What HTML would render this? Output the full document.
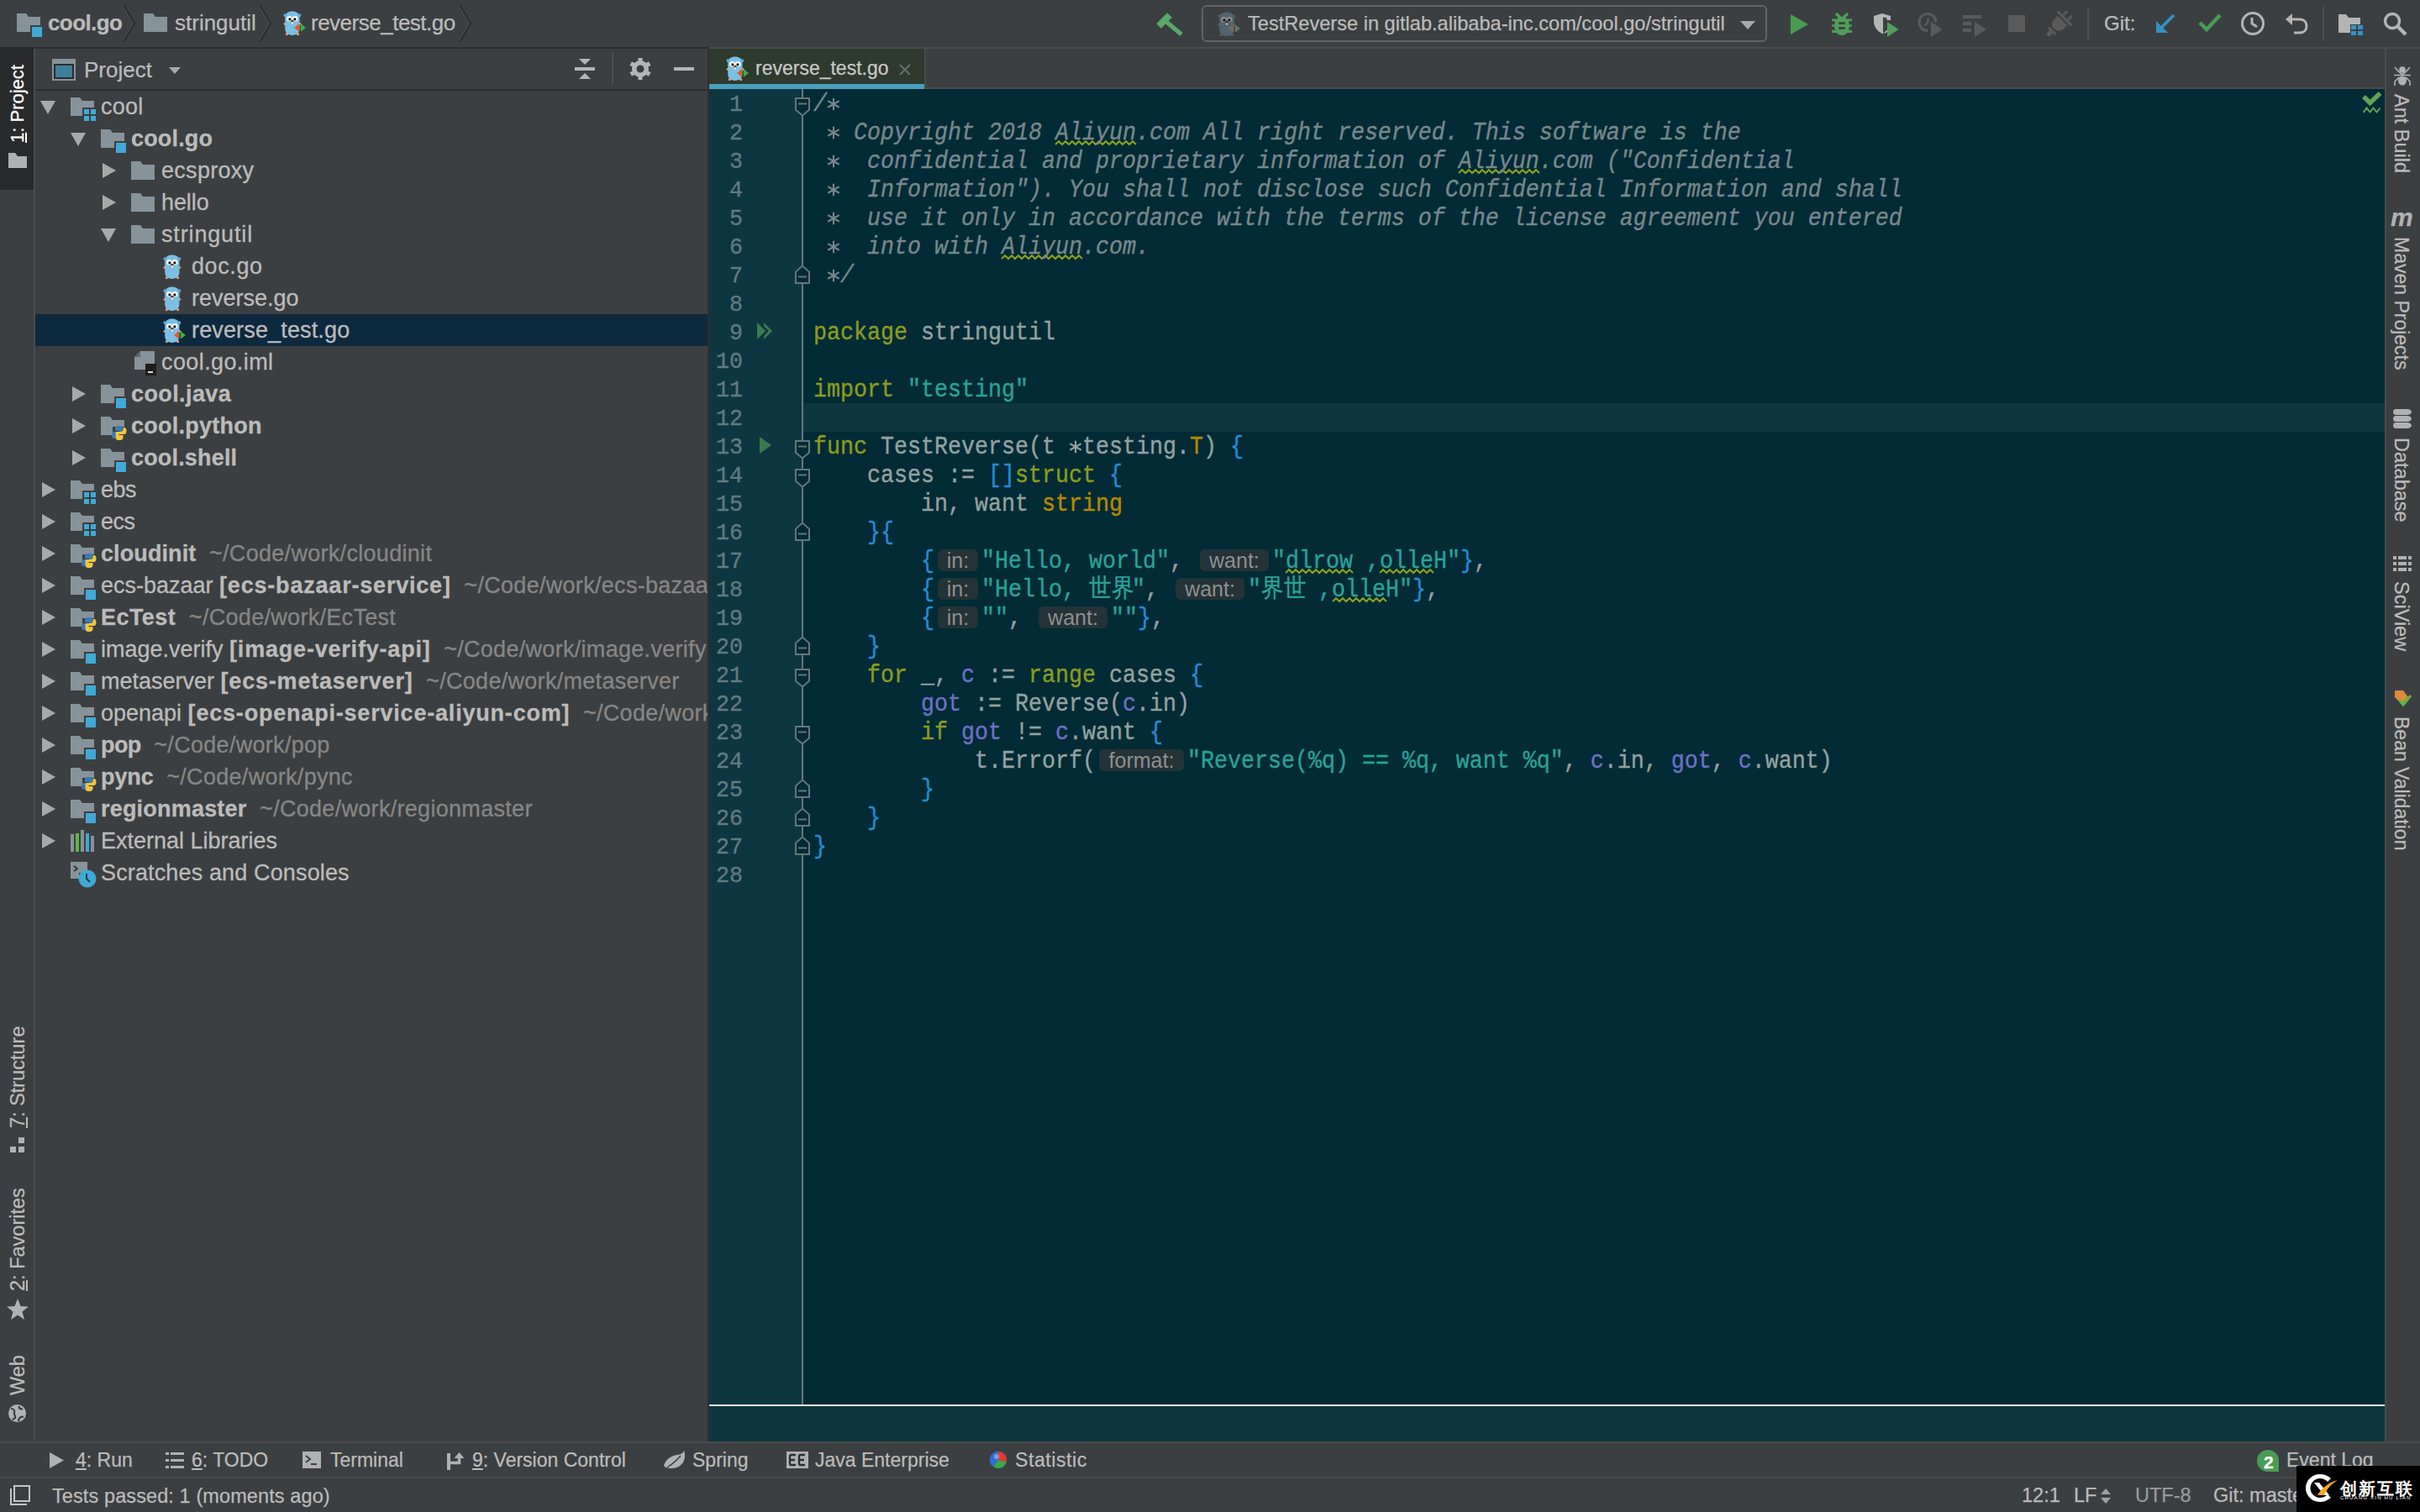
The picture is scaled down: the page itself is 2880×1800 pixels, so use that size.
<!DOCTYPE html><html><head><meta charset="utf-8"><title>GoLand</title><style>
*{margin:0;padding:0;box-sizing:border-box}
html,body{width:2880px;height:1800px;overflow:hidden;background:#3c3f41;font-family:"Liberation Sans",sans-serif;color:#bbbbbb}
.a{position:absolute}
.t{position:absolute;white-space:pre;-webkit-text-stroke:0.25px currentColor}
svg{position:absolute;overflow:visible}
.code{position:absolute;left:968px;font-family:"Liberation Mono",monospace;font-size:26.67px;line-height:34px;white-space:pre;color:#93a1a1;transform:scaleY(1.13);transform-origin:0 24px;-webkit-text-stroke:0.35px currentColor}
.ln{position:absolute;left:844px;width:40px;text-align:right;font-family:"Liberation Mono",monospace;font-size:26.67px;line-height:34px;color:#617a80;transform:scaleY(1.05);transform-origin:0 24px;-webkit-text-stroke:0.35px currentColor}
.cm{color:#76878c;font-style:italic}
.ast{position:relative}
.ast i{color:transparent;-webkit-text-stroke:0}
.ast svg{position:absolute;left:0;top:8px}
.kw{color:#8a9b22}
.st{color:#2aa198}
.br{color:#268bd2}
.ty{color:#b58900}
.vr{color:#6c71c4}
.hint{display:inline-block;position:relative;height:34px;vertical-align:top}
.hint b{position:absolute;left:4px;top:2px;transform:scaleY(0.885);transform-origin:0 22px;-webkit-text-stroke:0;height:26px;border-radius:6px;background:#243337;color:#8f8f8f;font-family:"Liberation Sans",sans-serif;font-weight:normal;font-style:normal;font-size:25px;line-height:26px;text-align:center}
.row{position:absolute;height:38px;line-height:38px;font-size:27px;white-space:pre;color:#bbbbbb;-webkit-text-stroke:0.3px currentColor}
.gr{color:#868686}
.bd{font-weight:bold}
.vt{position:absolute;white-space:pre;font-size:23.5px;line-height:40px;color:#bbbbbb;transform-origin:0 0}
.bl{position:absolute;white-space:pre;font-size:23px;line-height:40px;color:#bbbbbb}
</style></head><body>
<div class="a" style="left:0px;top:0px;width:2880px;height:56px;background:#3c3f41;"></div>
<div class="a" style="left:0px;top:56px;width:844px;height:2px;background:#2e2e2e;"></div>
<div class="a" style="left:844px;top:56px;width:2036px;height:2px;background:#4b4b4b;"></div>
<div class="a" style="left:0px;top:58px;width:40px;height:1658px;background:#3c3f41;"></div>
<div class="a" style="left:40px;top:58px;width:2px;height:1658px;background:#4a4c4e;"></div>
<div class="a" style="left:42px;top:58px;width:800px;height:1658px;background:#3c3f41;"></div>
<div class="a" style="left:842px;top:58px;width:2px;height:1658px;background:#2e2e2e;"></div>
<div class="a" style="left:844px;top:58px;width:1994px;height:48px;background:#3c3f41;"></div>
<div class="a" style="left:844px;top:106px;width:1994px;height:1566px;background:#022b35;"></div>
<div class="a" style="left:844px;top:106px;width:112px;height:1566px;background:#0e3641;"></div>
<div class="a" style="left:844px;top:1672px;width:1994px;height:2px;background:#e8e8e8;"></div>
<div class="a" style="left:844px;top:1674px;width:1994px;height:42px;background:#0e3641;"></div>
<div class="a" style="left:2838px;top:58px;width:2px;height:1658px;background:#4a4c4e;"></div>
<div class="a" style="left:2840px;top:58px;width:40px;height:1658px;background:#3c3f41;"></div>
<div class="a" style="left:0px;top:1716px;width:2880px;height:2px;background:#4a4a4a;"></div>
<div class="a" style="left:0px;top:1718px;width:2880px;height:40px;background:#3c3f41;"></div>
<div class="a" style="left:0px;top:1758px;width:2880px;height:2px;background:#474747;"></div>
<div class="a" style="left:0px;top:1760px;width:2880px;height:40px;background:#3c3f41;"></div>
<svg style="left:20px;top:16px" width="30" height="28" viewBox="0 0 30 28"><path d="M0 0 H11 L14 4 H28 V14 H16 V22 H0 Z" fill="#87939a"/><rect x="18" y="16" width="12" height="12" fill="#40a9d8"/></svg>
<div class="t" style="left:57px;top:11.39px;font-size:26px;line-height:32px;color:#bbbbbb;font-weight:bold;letter-spacing:-0.6px">cool.go</div>
<svg style="left:146px;top:6px" width="16" height="44" viewBox="0 0 16 44"><path d="M1 0 L14 22 L1 44" stroke="#2a2a2a" stroke-width="2" fill="none"/><path d="M0 1 L12.5 22 L0 43" stroke="#545657" stroke-width="1" fill="none" opacity="0.8"/></svg>
<svg style="left:171px;top:16px" width="28" height="22" viewBox="0 0 28 22"><path d="M0 0 H11 L14 4 H28 V22 H0 Z" fill="#87939a"/></svg>
<div class="t" style="left:208px;top:11.39px;font-size:26px;line-height:32px;color:#bbbbbb;">stringutil</div>
<svg style="left:308px;top:6px" width="16" height="44" viewBox="0 0 16 44"><path d="M1 0 L14 22 L1 44" stroke="#2a2a2a" stroke-width="2" fill="none"/><path d="M0 1 L12.5 22 L0 43" stroke="#545657" stroke-width="1" fill="none" opacity="0.8"/></svg>
<svg style="left:337px;top:13px" width="28" height="30" viewBox="0 0 28 30"><path d="M2.2 8 C2.2 2.5 6 0.6 10.85 0.6 C15.7 0.6 19.5 2.5 19.5 8 V21 C19.5 26 16 28.9 10.85 28.9 C5.7 28.9 2.2 26 2.2 21 Z" fill="#7bbfe4"/><ellipse cx="2.4" cy="5.3" rx="1.9" ry="2" fill="#5fa8d6"/><ellipse cx="19.4" cy="5.3" rx="1.9" ry="2" fill="#5fa8d6"/><circle cx="2" cy="15.5" r="1.4" fill="#d8a584"/><circle cx="19.8" cy="15.5" r="1.4" fill="#d8a584"/><circle cx="4.4" cy="27.6" r="1.6" fill="#d8a584"/><circle cx="17.6" cy="27.6" r="1.6" fill="#d8a584"/><circle cx="7.5" cy="9.3" r="3.3" fill="#ffffff"/><circle cx="14.2" cy="9.3" r="3.3" fill="#ffffff"/><circle cx="7.9" cy="9.9" r="1.6" fill="#111"/><circle cx="13.9" cy="9.9" r="1.6" fill="#111"/><ellipse cx="10.9" cy="12.3" rx="1.6" ry="1.2" fill="#1d1a18"/><ellipse cx="10.9" cy="13.4" rx="2" ry="1" fill="#d8a584"/><rect x="10.1" y="13.8" width="1.7" height="1.6" fill="#fff"/><path d="M19.1 15.1 L13.1 19.9 L19.1 24.8 Z" fill="#e0592e"/><path d="M20.8 15.1 L27 19.9 L20.8 24.8 Z" fill="#3fae3f"/></svg>
<div class="t" style="left:370px;top:11.39px;font-size:26px;line-height:32px;color:#bbbbbb;letter-spacing:-0.5px">reverse_test.go</div>
<svg style="left:546px;top:6px" width="16" height="44" viewBox="0 0 16 44"><path d="M1 0 L14 22 L1 44" stroke="#2a2a2a" stroke-width="2" fill="none"/><path d="M0 1 L12.5 22 L0 43" stroke="#545657" stroke-width="1" fill="none" opacity="0.8"/></svg>
<svg style="left:1376px;top:14px" width="32" height="28" viewBox="0 0 32 28"><path d="M3 17 L16 4" stroke="#59a869" stroke-width="8"/><path d="M11 11 L30 27" stroke="#59a869" stroke-width="5"/></svg>
<div class="a" style="left:1430px;top:6px;width:673px;height:44px;border:2px solid #626364;border-radius:6px;background:#3c3f41"></div>
<svg style="left:1449px;top:13.5px" width="28" height="30" viewBox="0 0 28 30"><path d="M2.2 8 C2.2 2.5 6 0.6 10.85 0.6 C15.7 0.6 19.5 2.5 19.5 8 V21 C19.5 26 16 28.9 10.85 28.9 C5.7 28.9 2.2 26 2.2 21 Z" fill="#506470"/><ellipse cx="2.4" cy="5.3" rx="1.9" ry="2" fill="#4d5e67"/><ellipse cx="19.4" cy="5.3" rx="1.9" ry="2" fill="#4d5e67"/><circle cx="2" cy="15.5" r="1.4" fill="#6e5a50"/><circle cx="19.8" cy="15.5" r="1.4" fill="#6e5a50"/><circle cx="4.4" cy="27.6" r="1.6" fill="#6e5a50"/><circle cx="17.6" cy="27.6" r="1.6" fill="#6e5a50"/><circle cx="7.5" cy="9.3" r="3.3" fill="#8e8e8e"/><circle cx="14.2" cy="9.3" r="3.3" fill="#8e8e8e"/><circle cx="7.9" cy="9.9" r="1.6" fill="#111"/><circle cx="13.9" cy="9.9" r="1.6" fill="#111"/><ellipse cx="10.9" cy="12.3" rx="1.6" ry="1.2" fill="#1d1a18"/><ellipse cx="10.9" cy="13.4" rx="2" ry="1" fill="#6e5a50"/><rect x="10.1" y="13.8" width="1.7" height="1.6" fill="#fff"/><path d="M19.1 15.1 L13.1 19.9 L19.1 24.8 Z" fill="#77665e"/><path d="M20.8 15.1 L27 19.9 L20.8 24.8 Z" fill="#5e7a5e"/></svg>
<div class="t" style="left:1485px;top:12.82px;font-size:23.6px;line-height:30px;color:#bbbbbb;">TestReverse in gitlab.alibaba-inc.com/cool.go/stringutil</div>
<svg style="left:2071px;top:25px" width="18" height="10" viewBox="0 0 18 10"><path d="M0 0 H18 L9 10 Z" fill="#a9a9a9"/></svg>
<svg style="left:2131px;top:17px" width="21" height="24" viewBox="0 0 21 24"><path d="M0 0 L21 12 L0 24 Z" fill="#499c54"/></svg>
<svg style="left:2180px;top:14px" width="24" height="28" viewBox="0 0 24 28"><g fill="#509e5c"><path d="M5 2 L11 8 M19 2 L13 8" stroke="#509e5c" stroke-width="3.2"/><ellipse cx="12" cy="17" rx="9" ry="11"/><rect x="0" y="8.5" width="24" height="3"/><rect x="0" y="15.3" width="24" height="2.6"/><rect x="0" y="21.8" width="24" height="3.2"/></g><rect x="8.2" y="12.2" width="7.6" height="2.7" fill="#3c3f41"/><rect x="8.2" y="18.2" width="7.6" height="2.7" fill="#3c3f41"/><path d="M0 12.5 H3 M21 12.5 H24 M0 19 H3 M21 19 H24" stroke="#3c3f41" stroke-width="2.6"/></svg>
<svg style="left:2230px;top:16px" width="30" height="28" viewBox="0 0 30 28"><path d="M0 3 L10 0 L20 3 V8 H15.5 V5.5 L11 4.5 V24 L16 19.5 V22 C14 23.5 12 24 10 24 C4 21 0 16 0 9 Z" fill="#b4b5b7"/><path d="M16 10 L29.5 19 L16 28 Z" fill="#509e5c"/></svg>
<svg style="left:2282px;top:15px" width="30" height="30" viewBox="0 0 30 30"><path d="M12 21.5 A10 10 0 1 1 22 11.5" stroke="#5a5a5a" stroke-width="3" fill="none"/><path d="M12.5 6.5 V11 L8.5 15.5" stroke="#5a5a5a" stroke-width="2.5" fill="none"/><path d="M16 11 L29.5 20 L16 29 Z" fill="#5a5a5a"/></svg>
<svg style="left:2336px;top:18px" width="28" height="27" viewBox="0 0 28 27"><rect x="0" y="0" width="22" height="4" fill="#5a5a5a"/><rect x="0" y="8" width="10" height="4" fill="#5a5a5a"/><rect x="0" y="16" width="10" height="4" fill="#5a5a5a"/><path d="M14 8 L28 17 L14 26 Z" fill="#5a5a5a"/></svg>
<div class="a" style="left:2390px;top:18px;width:20px;height:20px;background:#5a5a5a;"></div>
<svg style="left:2436px;top:12px" width="30" height="32" viewBox="0 0 30 32"><g transform="rotate(45 15 16)" fill="#5a5a5a"><rect x="9.5" y="-1" width="3" height="7" rx="1.2"/><rect x="17.5" y="-1" width="3" height="7" rx="1.2"/><rect x="3" y="6" width="24" height="3" rx="1.2"/><path d="M7 11 H23 V17 C23 22 19.5 25 15 25 C10.5 25 7 22 7 17 Z"/><rect x="9" y="27" width="12" height="3" rx="1.2"/><rect x="12.5" y="30" width="5" height="6"/></g></svg>
<div class="a" style="left:2484px;top:8px;width:2px;height:40px;background:#4e5052;"></div>
<div class="t" style="left:2504px;top:12.68px;font-size:24px;line-height:30px;color:#bbbbbb;">Git:</div>
<svg style="left:2566px;top:17px" width="23" height="22" viewBox="0 0 23 22"><path d="M21 1 L4 18" stroke="#3592c4" stroke-width="3.5"/><path d="M0 8 V22 H14 Z" fill="#3592c4"/></svg>
<svg style="left:2616px;top:16px" width="28" height="22" viewBox="0 0 28 22"><path d="M2 11 L10 19 L26 2" stroke="#499c54" stroke-width="4.5" fill="none"/></svg>
<svg style="left:2666px;top:13px" width="30" height="30" viewBox="0 0 30 30"><circle cx="15" cy="15" r="12.5" stroke="#b4b4b4" stroke-width="3" fill="none"/><path d="M14 8 V15 L20 19" stroke="#b4b4b4" stroke-width="3" fill="none"/></svg>
<svg style="left:2720px;top:14px" width="27" height="26" viewBox="0 0 27 26"><path d="M6 9 H17 C22 9 25 12.5 25 17 C25 21.5 22 25 17 25 H10" stroke="#b4b4b4" stroke-width="3" fill="none"/><path d="M0 9 L8 2 V16 Z" fill="#b4b4b4"/></svg>
<div class="a" style="left:2764px;top:8px;width:2px;height:40px;background:#4e5052;"></div>
<svg style="left:2783px;top:17px" width="30" height="25" viewBox="0 0 30 25"><path d="M0 0 H9 L12 4 H26 V12 H14 V22 H0 Z" fill="#b4b4b4"/><rect x="15" y="13" width="6" height="5" fill="#3592c4"/><rect x="23" y="13" width="6" height="5" fill="#3592c4"/><rect x="15" y="20" width="6" height="5" fill="#3592c4"/><rect x="23" y="20" width="6" height="5" fill="#3592c4"/></svg>
<svg style="left:2836px;top:14px" width="29" height="29" viewBox="0 0 29 29"><circle cx="11" cy="11" r="8.5" stroke="#b4b4b4" stroke-width="3.5" fill="none"/><path d="M17.5 17.5 L27 27" stroke="#b4b4b4" stroke-width="4.5"/></svg>
<svg style="left:62px;top:70px" width="28" height="26" viewBox="0 0 28 26"><rect x="0" y="0" width="28" height="26" fill="#87939a"/><rect x="2" y="6" width="24" height="18" fill="#2b2d2e"/><rect x="4" y="8" width="20" height="14" fill="#3f7f9c"/></svg>
<div class="t" style="left:100px;top:67.29px;font-size:26px;line-height:32px;color:#bbbbbb;">Project</div>
<svg style="left:201px;top:80px" width="14" height="8" viewBox="0 0 14 8"><path d="M0 0 H14 L7 8 Z" fill="#a9a9a9"/></svg>
<svg style="left:683px;top:69px" width="26" height="26" viewBox="0 0 26 26"><rect x="1" y="11" width="24" height="4" fill="#b4b5b7"/><path d="M6 1 H20 L13 8 Z" fill="#b4b5b7"/><path d="M6 25 H20 L13 18 Z" fill="#b4b5b7"/></svg>
<div class="a" style="left:728px;top:62px;width:2px;height:39px;background:#4e5052;"></div>
<svg style="left:749px;top:69px" width="26" height="26" viewBox="0 0 26 26"><g fill="#b4b5b7"><circle cx="13" cy="13" r="10"/><rect x="10.5" y="0" width="5" height="26" transform="rotate(0 13 13)"/><rect x="10.5" y="0" width="5" height="26" transform="rotate(60 13 13)"/><rect x="10.5" y="0" width="5" height="26" transform="rotate(120 13 13)"/></g><circle cx="13" cy="13" r="4.5" fill="#3c3f41"/></svg>
<div class="a" style="left:802px;top:80px;width:24px;height:4px;background:#b4b5b7;"></div>
<div class="a" style="left:42px;top:106px;width:800px;height:2px;background:#2e2e2e;"></div>
<div class="a" style="left:42px;top:374px;width:800px;height:38px;background:#0d293e;"></div>
<div class="a" style="left:42px;top:108px;width:800px;height:1000px;overflow:hidden">
<svg style="left:6px;top:12px" width="18" height="16" viewBox="0 0 18 16"><path d="M0 0 H18 L9 16 Z" fill="#a9a9a9"/></svg>
<svg style="left:42px;top:8px" width="30" height="28" viewBox="0 0 30 28"><path d="M0 0 H11 L14 4 H28 V12 H14 V22 H0 Z" fill="#87939a"/><rect x="16" y="14" width="6" height="6" fill="#40a9d8"/><rect x="24" y="14" width="6" height="6" fill="#40a9d8"/><rect x="16" y="22" width="6" height="6" fill="#40a9d8"/><rect x="24" y="22" width="6" height="6" fill="#40a9d8"/></svg>
<div class="row" style="left:78px;top:0px"><span class="" style="letter-spacing:0.27px">cool</span></div>
<svg style="left:42px;top:50px" width="18" height="16" viewBox="0 0 18 16"><path d="M0 0 H18 L9 16 Z" fill="#a9a9a9"/></svg>
<svg style="left:78px;top:46px" width="30" height="28" viewBox="0 0 30 28"><path d="M0 0 H11 L14 4 H28 V14 H16 V22 H0 Z" fill="#87939a"/><rect x="18" y="16" width="12" height="12" fill="#40a9d8"/></svg>
<div class="row" style="left:114px;top:38px"><span class="bd" style="letter-spacing:0.17px">cool.go</span></div>
<svg style="left:80px;top:86px" width="16" height="18" viewBox="0 0 16 18"><path d="M0 0 L16 9 L0 18 Z" fill="#a9a9a9"/></svg>
<svg style="left:114px;top:84px" width="28" height="22" viewBox="0 0 28 22"><path d="M0 0 H11 L14 4 H28 V22 H0 Z" fill="#87939a"/></svg>
<div class="row" style="left:150px;top:76px"><span class="" style="letter-spacing:0.29px">ecsproxy</span></div>
<svg style="left:80px;top:124px" width="16" height="18" viewBox="0 0 16 18"><path d="M0 0 L16 9 L0 18 Z" fill="#a9a9a9"/></svg>
<svg style="left:114px;top:122px" width="28" height="22" viewBox="0 0 28 22"><path d="M0 0 H11 L14 4 H28 V22 H0 Z" fill="#87939a"/></svg>
<div class="row" style="left:150px;top:114px"><span class="" style="letter-spacing:-0.1px">hello</span></div>
<svg style="left:78px;top:164px" width="18" height="16" viewBox="0 0 18 16"><path d="M0 0 H18 L9 16 Z" fill="#a9a9a9"/></svg>
<svg style="left:114px;top:160px" width="28" height="22" viewBox="0 0 28 22"><path d="M0 0 H11 L14 4 H28 V22 H0 Z" fill="#87939a"/></svg>
<div class="row" style="left:150px;top:152px"><span class="" style="letter-spacing:0.85px">stringutil</span></div>
<svg style="left:151.5px;top:195px" width="22" height="30" viewBox="0 0 22 30"><path d="M2.2 8 C2.2 2.5 6 0.6 10.85 0.6 C15.7 0.6 19.5 2.5 19.5 8 V21 C19.5 26 16 28.9 10.85 28.9 C5.7 28.9 2.2 26 2.2 21 Z" fill="#7bbfe4"/><ellipse cx="2.4" cy="5.3" rx="1.9" ry="2" fill="#5fa8d6"/><ellipse cx="19.4" cy="5.3" rx="1.9" ry="2" fill="#5fa8d6"/><circle cx="2" cy="15.5" r="1.4" fill="#d8a584"/><circle cx="19.8" cy="15.5" r="1.4" fill="#d8a584"/><circle cx="4.4" cy="27.6" r="1.6" fill="#d8a584"/><circle cx="17.6" cy="27.6" r="1.6" fill="#d8a584"/><circle cx="7.5" cy="9.3" r="3.3" fill="#ffffff"/><circle cx="14.2" cy="9.3" r="3.3" fill="#ffffff"/><circle cx="7.9" cy="9.9" r="1.6" fill="#111"/><circle cx="13.9" cy="9.9" r="1.6" fill="#111"/><ellipse cx="10.9" cy="12.3" rx="1.6" ry="1.2" fill="#1d1a18"/><ellipse cx="10.9" cy="13.4" rx="2" ry="1" fill="#d8a584"/><rect x="10.1" y="13.8" width="1.7" height="1.6" fill="#fff"/></svg>
<div class="row" style="left:186px;top:190px"><span class="" style="letter-spacing:0.6px">doc.go</span></div>
<svg style="left:151.5px;top:233px" width="22" height="30" viewBox="0 0 22 30"><path d="M2.2 8 C2.2 2.5 6 0.6 10.85 0.6 C15.7 0.6 19.5 2.5 19.5 8 V21 C19.5 26 16 28.9 10.85 28.9 C5.7 28.9 2.2 26 2.2 21 Z" fill="#7bbfe4"/><ellipse cx="2.4" cy="5.3" rx="1.9" ry="2" fill="#5fa8d6"/><ellipse cx="19.4" cy="5.3" rx="1.9" ry="2" fill="#5fa8d6"/><circle cx="2" cy="15.5" r="1.4" fill="#d8a584"/><circle cx="19.8" cy="15.5" r="1.4" fill="#d8a584"/><circle cx="4.4" cy="27.6" r="1.6" fill="#d8a584"/><circle cx="17.6" cy="27.6" r="1.6" fill="#d8a584"/><circle cx="7.5" cy="9.3" r="3.3" fill="#ffffff"/><circle cx="14.2" cy="9.3" r="3.3" fill="#ffffff"/><circle cx="7.9" cy="9.9" r="1.6" fill="#111"/><circle cx="13.9" cy="9.9" r="1.6" fill="#111"/><ellipse cx="10.9" cy="12.3" rx="1.6" ry="1.2" fill="#1d1a18"/><ellipse cx="10.9" cy="13.4" rx="2" ry="1" fill="#d8a584"/><rect x="10.1" y="13.8" width="1.7" height="1.6" fill="#fff"/></svg>
<div class="row" style="left:186px;top:228px"><span class="" style="letter-spacing:0px">reverse.go</span></div>
<svg style="left:151.5px;top:271px" width="28" height="30" viewBox="0 0 28 30"><path d="M2.2 8 C2.2 2.5 6 0.6 10.85 0.6 C15.7 0.6 19.5 2.5 19.5 8 V21 C19.5 26 16 28.9 10.85 28.9 C5.7 28.9 2.2 26 2.2 21 Z" fill="#7bbfe4"/><ellipse cx="2.4" cy="5.3" rx="1.9" ry="2" fill="#5fa8d6"/><ellipse cx="19.4" cy="5.3" rx="1.9" ry="2" fill="#5fa8d6"/><circle cx="2" cy="15.5" r="1.4" fill="#d8a584"/><circle cx="19.8" cy="15.5" r="1.4" fill="#d8a584"/><circle cx="4.4" cy="27.6" r="1.6" fill="#d8a584"/><circle cx="17.6" cy="27.6" r="1.6" fill="#d8a584"/><circle cx="7.5" cy="9.3" r="3.3" fill="#ffffff"/><circle cx="14.2" cy="9.3" r="3.3" fill="#ffffff"/><circle cx="7.9" cy="9.9" r="1.6" fill="#111"/><circle cx="13.9" cy="9.9" r="1.6" fill="#111"/><ellipse cx="10.9" cy="12.3" rx="1.6" ry="1.2" fill="#1d1a18"/><ellipse cx="10.9" cy="13.4" rx="2" ry="1" fill="#d8a584"/><rect x="10.1" y="13.8" width="1.7" height="1.6" fill="#fff"/><path d="M19.1 15.1 L13.1 19.9 L19.1 24.8 Z" fill="#e0592e"/><path d="M20.8 15.1 L27 19.9 L20.8 24.8 Z" fill="#3fae3f"/></svg>
<div class="row" style="left:186px;top:266px"><span class="" style="letter-spacing:0.15px">reverse_test.go</span></div>
<svg style="left:118px;top:310px" width="26" height="29" viewBox="0 0 26 29"><path d="M7 0 H24 V22 H0 V7 Z" fill="#87939a"/><path d="M0 7 H7 V0 Z" fill="#5d676c"/><rect x="13" y="15" width="13" height="14" fill="#1e1e1e"/><rect x="16" y="24" width="6" height="2" fill="#ddd"/></svg>
<div class="row" style="left:150px;top:304px"><span class="" style="letter-spacing:0.4px">cool.go.iml</span></div>
<svg style="left:44px;top:352px" width="16" height="18" viewBox="0 0 16 18"><path d="M0 0 L16 9 L0 18 Z" fill="#a9a9a9"/></svg>
<svg style="left:78px;top:350px" width="30" height="28" viewBox="0 0 30 28"><path d="M0 0 H11 L14 4 H28 V14 H16 V22 H0 Z" fill="#87939a"/><rect x="18" y="16" width="12" height="12" fill="#40a9d8"/></svg>
<div class="row" style="left:114px;top:342px"><span class="bd" style="letter-spacing:0.4px">cool.java</span></div>
<svg style="left:44px;top:390px" width="16" height="18" viewBox="0 0 16 18"><path d="M0 0 L16 9 L0 18 Z" fill="#a9a9a9"/></svg>
<svg style="left:78px;top:388px" width="31" height="29" viewBox="0 0 31 29"><path d="M0 0 H11 L14 4 H28 V12 H14 V22 H0 Z" fill="#87939a"/><path d="M21.5 11 C18 11 17 12.5 17 14 V17 H22 V18 H15.5 C14 18 13 19.5 13 22 C13 24.5 14 26 15.5 26 H17 V23.5 C17 22 18 21 19.5 21 H24 C25.5 21 26 20 26 19 V14 C26 12.5 25 11 21.5 11 Z" fill="#3a7ab8"/><path d="M22 28 C25.5 28 26.5 26.5 26.5 25 V22 H21.5 V21 H28 C29.5 21 30.5 19.5 30.5 17 C30.5 14.5 29.5 13 28 13 H26.5 V15.5 C26.5 17 25.5 18 24 18 H19.5 C18 18 17.5 19 17.5 20 V25 C17.5 26.5 18.5 28 22 28 Z" fill="#f2c53d"/></svg>
<div class="row" style="left:114px;top:380px"><span class="bd" style="letter-spacing:0.25px">cool.python</span></div>
<svg style="left:44px;top:428px" width="16" height="18" viewBox="0 0 16 18"><path d="M0 0 L16 9 L0 18 Z" fill="#a9a9a9"/></svg>
<svg style="left:78px;top:426px" width="30" height="28" viewBox="0 0 30 28"><path d="M0 0 H11 L14 4 H28 V14 H16 V22 H0 Z" fill="#87939a"/><rect x="18" y="16" width="12" height="12" fill="#40a9d8"/></svg>
<div class="row" style="left:114px;top:418px"><span class="bd" style="letter-spacing:0.17px">cool.shell</span></div>
<svg style="left:8px;top:466px" width="16" height="18" viewBox="0 0 16 18"><path d="M0 0 L16 9 L0 18 Z" fill="#a9a9a9"/></svg>
<svg style="left:42px;top:464px" width="30" height="28" viewBox="0 0 30 28"><path d="M0 0 H11 L14 4 H28 V12 H14 V22 H0 Z" fill="#87939a"/><rect x="16" y="14" width="6" height="6" fill="#40a9d8"/><rect x="24" y="14" width="6" height="6" fill="#40a9d8"/><rect x="16" y="22" width="6" height="6" fill="#40a9d8"/><rect x="24" y="22" width="6" height="6" fill="#40a9d8"/></svg>
<div class="row" style="left:78px;top:456px"><span class="" style="letter-spacing:-0.5px">ebs</span></div>
<svg style="left:8px;top:504px" width="16" height="18" viewBox="0 0 16 18"><path d="M0 0 L16 9 L0 18 Z" fill="#a9a9a9"/></svg>
<svg style="left:42px;top:502px" width="30" height="28" viewBox="0 0 30 28"><path d="M0 0 H11 L14 4 H28 V12 H14 V22 H0 Z" fill="#87939a"/><rect x="16" y="14" width="6" height="6" fill="#40a9d8"/><rect x="24" y="14" width="6" height="6" fill="#40a9d8"/><rect x="16" y="22" width="6" height="6" fill="#40a9d8"/><rect x="24" y="22" width="6" height="6" fill="#40a9d8"/></svg>
<div class="row" style="left:78px;top:494px"><span class="" style="letter-spacing:-0.5px">ecs</span></div>
<svg style="left:8px;top:542px" width="16" height="18" viewBox="0 0 16 18"><path d="M0 0 L16 9 L0 18 Z" fill="#a9a9a9"/></svg>
<svg style="left:42px;top:540px" width="31" height="29" viewBox="0 0 31 29"><path d="M0 0 H11 L14 4 H28 V12 H14 V22 H0 Z" fill="#87939a"/><path d="M21.5 11 C18 11 17 12.5 17 14 V17 H22 V18 H15.5 C14 18 13 19.5 13 22 C13 24.5 14 26 15.5 26 H17 V23.5 C17 22 18 21 19.5 21 H24 C25.5 21 26 20 26 19 V14 C26 12.5 25 11 21.5 11 Z" fill="#3a7ab8"/><path d="M22 28 C25.5 28 26.5 26.5 26.5 25 V22 H21.5 V21 H28 C29.5 21 30.5 19.5 30.5 17 C30.5 14.5 29.5 13 28 13 H26.5 V15.5 C26.5 17 25.5 18 24 18 H19.5 C18 18 17.5 19 17.5 20 V25 C17.5 26.5 18.5 28 22 28 Z" fill="#f2c53d"/></svg>
<div class="row" style="left:78px;top:532px"><span class="bd" style="letter-spacing:0.1px">cloudinit</span><span class="gr" style="letter-spacing:0.3px">  ~/Code/work/cloudinit</span></div>
<svg style="left:8px;top:580px" width="16" height="18" viewBox="0 0 16 18"><path d="M0 0 L16 9 L0 18 Z" fill="#a9a9a9"/></svg>
<svg style="left:42px;top:578px" width="30" height="28" viewBox="0 0 30 28"><path d="M0 0 H11 L14 4 H28 V14 H16 V22 H0 Z" fill="#87939a"/><rect x="18" y="16" width="12" height="12" fill="#40a9d8"/></svg>
<div class="row" style="left:78px;top:570px"><span class="" style="letter-spacing:0">ecs-bazaar </span><span class="bd" style="letter-spacing:0.8px">[ecs-bazaar-service]</span><span class="gr" style="letter-spacing:0.3px">  ~/Code/work/ecs-bazaar</span></div>
<svg style="left:8px;top:618px" width="16" height="18" viewBox="0 0 16 18"><path d="M0 0 L16 9 L0 18 Z" fill="#a9a9a9"/></svg>
<svg style="left:42px;top:616px" width="31" height="29" viewBox="0 0 31 29"><path d="M0 0 H11 L14 4 H28 V12 H14 V22 H0 Z" fill="#87939a"/><path d="M21.5 11 C18 11 17 12.5 17 14 V17 H22 V18 H15.5 C14 18 13 19.5 13 22 C13 24.5 14 26 15.5 26 H17 V23.5 C17 22 18 21 19.5 21 H24 C25.5 21 26 20 26 19 V14 C26 12.5 25 11 21.5 11 Z" fill="#3a7ab8"/><path d="M22 28 C25.5 28 26.5 26.5 26.5 25 V22 H21.5 V21 H28 C29.5 21 30.5 19.5 30.5 17 C30.5 14.5 29.5 13 28 13 H26.5 V15.5 C26.5 17 25.5 18 24 18 H19.5 C18 18 17.5 19 17.5 20 V25 C17.5 26.5 18.5 28 22 28 Z" fill="#f2c53d"/></svg>
<div class="row" style="left:78px;top:608px"><span class="bd" style="letter-spacing:0.45px">EcTest</span><span class="gr" style="letter-spacing:0.3px">  ~/Code/work/EcTest</span></div>
<svg style="left:8px;top:656px" width="16" height="18" viewBox="0 0 16 18"><path d="M0 0 L16 9 L0 18 Z" fill="#a9a9a9"/></svg>
<svg style="left:42px;top:654px" width="30" height="28" viewBox="0 0 30 28"><path d="M0 0 H11 L14 4 H28 V14 H16 V22 H0 Z" fill="#87939a"/><rect x="18" y="16" width="12" height="12" fill="#40a9d8"/></svg>
<div class="row" style="left:78px;top:646px"><span class="" style="letter-spacing:0">image.verify </span><span class="bd" style="letter-spacing:0.8px">[image-verify-api]</span><span class="gr" style="letter-spacing:0.3px">  ~/Code/work/image.verify</span></div>
<svg style="left:8px;top:694px" width="16" height="18" viewBox="0 0 16 18"><path d="M0 0 L16 9 L0 18 Z" fill="#a9a9a9"/></svg>
<svg style="left:42px;top:692px" width="30" height="28" viewBox="0 0 30 28"><path d="M0 0 H11 L14 4 H28 V14 H16 V22 H0 Z" fill="#87939a"/><rect x="18" y="16" width="12" height="12" fill="#40a9d8"/></svg>
<div class="row" style="left:78px;top:684px"><span class="" style="letter-spacing:0">metaserver </span><span class="bd" style="letter-spacing:0.8px">[ecs-metaserver]</span><span class="gr" style="letter-spacing:0.3px">  ~/Code/work/metaserver</span></div>
<svg style="left:8px;top:732px" width="16" height="18" viewBox="0 0 16 18"><path d="M0 0 L16 9 L0 18 Z" fill="#a9a9a9"/></svg>
<svg style="left:42px;top:730px" width="30" height="28" viewBox="0 0 30 28"><path d="M0 0 H11 L14 4 H28 V14 H16 V22 H0 Z" fill="#87939a"/><rect x="18" y="16" width="12" height="12" fill="#40a9d8"/></svg>
<div class="row" style="left:78px;top:722px"><span class="" style="letter-spacing:0">openapi </span><span class="bd" style="letter-spacing:0.8px">[ecs-openapi-service-aliyun-com]</span><span class="gr" style="letter-spacing:0.3px">  ~/Code/work/openapi</span></div>
<svg style="left:8px;top:770px" width="16" height="18" viewBox="0 0 16 18"><path d="M0 0 L16 9 L0 18 Z" fill="#a9a9a9"/></svg>
<svg style="left:42px;top:768px" width="30" height="28" viewBox="0 0 30 28"><path d="M0 0 H11 L14 4 H28 V14 H16 V22 H0 Z" fill="#87939a"/><rect x="18" y="16" width="12" height="12" fill="#40a9d8"/></svg>
<div class="row" style="left:78px;top:760px"><span class="bd" style="letter-spacing:-0.6px">pop</span><span class="gr" style="letter-spacing:0.3px">  ~/Code/work/pop</span></div>
<svg style="left:8px;top:808px" width="16" height="18" viewBox="0 0 16 18"><path d="M0 0 L16 9 L0 18 Z" fill="#a9a9a9"/></svg>
<svg style="left:42px;top:806px" width="31" height="29" viewBox="0 0 31 29"><path d="M0 0 H11 L14 4 H28 V12 H14 V22 H0 Z" fill="#87939a"/><path d="M21.5 11 C18 11 17 12.5 17 14 V17 H22 V18 H15.5 C14 18 13 19.5 13 22 C13 24.5 14 26 15.5 26 H17 V23.5 C17 22 18 21 19.5 21 H24 C25.5 21 26 20 26 19 V14 C26 12.5 25 11 21.5 11 Z" fill="#3a7ab8"/><path d="M22 28 C25.5 28 26.5 26.5 26.5 25 V22 H21.5 V21 H28 C29.5 21 30.5 19.5 30.5 17 C30.5 14.5 29.5 13 28 13 H26.5 V15.5 C26.5 17 25.5 18 24 18 H19.5 C18 18 17.5 19 17.5 20 V25 C17.5 26.5 18.5 28 22 28 Z" fill="#f2c53d"/></svg>
<div class="row" style="left:78px;top:798px"><span class="bd" style="letter-spacing:-0.1px">pync</span><span class="gr" style="letter-spacing:0.3px">  ~/Code/work/pync</span></div>
<svg style="left:8px;top:846px" width="16" height="18" viewBox="0 0 16 18"><path d="M0 0 L16 9 L0 18 Z" fill="#a9a9a9"/></svg>
<svg style="left:42px;top:844px" width="30" height="28" viewBox="0 0 30 28"><path d="M0 0 H11 L14 4 H28 V14 H16 V22 H0 Z" fill="#87939a"/><rect x="18" y="16" width="12" height="12" fill="#40a9d8"/></svg>
<div class="row" style="left:78px;top:836px"><span class="bd" style="letter-spacing:0.2px">regionmaster</span><span class="gr" style="letter-spacing:0.3px">  ~/Code/work/regionmaster</span></div>
<svg style="left:8px;top:884px" width="16" height="18" viewBox="0 0 16 18"><path d="M0 0 L16 9 L0 18 Z" fill="#a9a9a9"/></svg>
<svg style="left:42px;top:880px" width="28" height="26" viewBox="0 0 28 26"><rect x="0" y="5" width="4" height="21" fill="#87939a"/><rect x="6" y="4" width="4" height="22" fill="#62b543"/><rect x="12" y="0" width="4" height="26" fill="#87939a"/><rect x="18" y="4" width="4" height="22" fill="#40a9d8"/><rect x="24" y="7" width="4" height="19" fill="#87939a"/></svg>
<div class="row" style="left:78px;top:874px"><span class="" style="letter-spacing:0px">External Libraries</span></div>
<svg style="left:42px;top:918px" width="31" height="31" viewBox="0 0 31 31"><rect x="0" y="0" width="20" height="13" fill="#87939a"/><rect x="0" y="13" width="10" height="7" fill="#87939a"/><path d="M4 5 L8 8 L4 11" stroke="#2b2b2b" stroke-width="1.6" fill="none"/><circle cx="20" cy="20" r="10.5" fill="#40a9d8"/><path d="M19 14 V20 L23 24" stroke="#1c3d50" stroke-width="2" fill="none"/></svg>
<div class="row" style="left:78px;top:912px"><span class="" style="letter-spacing:0.14px">Scratches and Consoles</span></div>
</div>
<div class="a" style="left:844px;top:58px;width:256px;height:42px;background:#2d3a2d;"></div>
<div class="a" style="left:844px;top:100px;width:256px;height:6px;background:#4a9fbd;"></div>
<div class="a" style="left:1100px;top:58px;width:2px;height:48px;background:#4b4b4b;"></div>
<div class="a" style="left:1102px;top:104px;width:1736px;height:2px;background:#4b4b4b;"></div>
<svg style="left:864px;top:67px" width="28" height="30" viewBox="0 0 28 30"><path d="M2.2 8 C2.2 2.5 6 0.6 10.85 0.6 C15.7 0.6 19.5 2.5 19.5 8 V21 C19.5 26 16 28.9 10.85 28.9 C5.7 28.9 2.2 26 2.2 21 Z" fill="#7bbfe4"/><ellipse cx="2.4" cy="5.3" rx="1.9" ry="2" fill="#5fa8d6"/><ellipse cx="19.4" cy="5.3" rx="1.9" ry="2" fill="#5fa8d6"/><circle cx="2" cy="15.5" r="1.4" fill="#d8a584"/><circle cx="19.8" cy="15.5" r="1.4" fill="#d8a584"/><circle cx="4.4" cy="27.6" r="1.6" fill="#d8a584"/><circle cx="17.6" cy="27.6" r="1.6" fill="#d8a584"/><circle cx="7.5" cy="9.3" r="3.3" fill="#ffffff"/><circle cx="14.2" cy="9.3" r="3.3" fill="#ffffff"/><circle cx="7.9" cy="9.9" r="1.6" fill="#111"/><circle cx="13.9" cy="9.9" r="1.6" fill="#111"/><ellipse cx="10.9" cy="12.3" rx="1.6" ry="1.2" fill="#1d1a18"/><ellipse cx="10.9" cy="13.4" rx="2" ry="1" fill="#d8a584"/><rect x="10.1" y="13.8" width="1.7" height="1.6" fill="#fff"/><path d="M19.1 15.1 L13.1 19.9 L19.1 24.8 Z" fill="#e0592e"/><path d="M20.8 15.1 L27 19.9 L20.8 24.8 Z" fill="#3fae3f"/></svg>
<div class="t" style="left:899px;top:67.03px;font-size:23px;line-height:29px;color:#c8c8c8;">reverse_test.go</div>
<svg style="left:1070px;top:76px" width="14" height="14" viewBox="0 0 14 14"><path d="M1 1 L13 13 M13 1 L1 13" stroke="#5f7370" stroke-width="2"/></svg>
<div class="a" style="left:956px;top:480px;width:1882px;height:34px;background:#0e3641;"></div>
<div class="a" style="left:954px;top:106px;width:2px;height:1566px;background:#63767b;"></div>
<svg style="left:945px;top:115px" width="20" height="24" viewBox="0 0 20 24"><path d="M2 2 H18 V15.8 L10 22.5 L2 15.8 Z" fill="#022b35" stroke="#63767b" stroke-width="2"/><rect x="5" y="7.5" width="10" height="2" fill="#63767b"/></svg>
<svg style="left:945px;top:523px" width="20" height="24" viewBox="0 0 20 24"><path d="M2 2 H18 V15.8 L10 22.5 L2 15.8 Z" fill="#022b35" stroke="#63767b" stroke-width="2"/><rect x="5" y="7.5" width="10" height="2" fill="#63767b"/></svg>
<svg style="left:945px;top:557px" width="20" height="24" viewBox="0 0 20 24"><path d="M2 2 H18 V15.8 L10 22.5 L2 15.8 Z" fill="#022b35" stroke="#63767b" stroke-width="2"/><rect x="5" y="7.5" width="10" height="2" fill="#63767b"/></svg>
<svg style="left:945px;top:795px" width="20" height="24" viewBox="0 0 20 24"><path d="M2 2 H18 V15.8 L10 22.5 L2 15.8 Z" fill="#022b35" stroke="#63767b" stroke-width="2"/><rect x="5" y="7.5" width="10" height="2" fill="#63767b"/></svg>
<svg style="left:945px;top:863px" width="20" height="24" viewBox="0 0 20 24"><path d="M2 2 H18 V15.8 L10 22.5 L2 15.8 Z" fill="#022b35" stroke="#63767b" stroke-width="2"/><rect x="5" y="7.5" width="10" height="2" fill="#63767b"/></svg>
<svg style="left:945px;top:315px" width="20" height="24" viewBox="0 0 20 24"><path d="M2 22 H18 V8.6 L10 1.5 L2 8.6 Z" fill="#022b35" stroke="#63767b" stroke-width="2"/><rect x="5" y="13.5" width="10" height="2" fill="#63767b"/></svg>
<svg style="left:945px;top:621px" width="20" height="24" viewBox="0 0 20 24"><path d="M2 22 H18 V8.6 L10 1.5 L2 8.6 Z" fill="#022b35" stroke="#63767b" stroke-width="2"/><rect x="5" y="13.5" width="10" height="2" fill="#63767b"/></svg>
<svg style="left:945px;top:757px" width="20" height="24" viewBox="0 0 20 24"><path d="M2 22 H18 V8.6 L10 1.5 L2 8.6 Z" fill="#022b35" stroke="#63767b" stroke-width="2"/><rect x="5" y="13.5" width="10" height="2" fill="#63767b"/></svg>
<svg style="left:945px;top:927px" width="20" height="24" viewBox="0 0 20 24"><path d="M2 22 H18 V8.6 L10 1.5 L2 8.6 Z" fill="#022b35" stroke="#63767b" stroke-width="2"/><rect x="5" y="13.5" width="10" height="2" fill="#63767b"/></svg>
<svg style="left:945px;top:961px" width="20" height="24" viewBox="0 0 20 24"><path d="M2 22 H18 V8.6 L10 1.5 L2 8.6 Z" fill="#022b35" stroke="#63767b" stroke-width="2"/><rect x="5" y="13.5" width="10" height="2" fill="#63767b"/></svg>
<svg style="left:945px;top:995px" width="20" height="24" viewBox="0 0 20 24"><path d="M2 22 H18 V8.6 L10 1.5 L2 8.6 Z" fill="#022b35" stroke="#63767b" stroke-width="2"/><rect x="5" y="13.5" width="10" height="2" fill="#63767b"/></svg>
<svg style="left:901px;top:384px" width="19" height="20" viewBox="0 0 19 20"><path d="M0 0 L10 10 L0 20 Z" fill="#3b7a50"/><path d="M8 0 L18 10 L8 20 L8 16 L14 10 L8 4 Z" fill="#3b7a50"/></svg>
<svg style="left:904px;top:520px" width="14" height="20" viewBox="0 0 14 20"><path d="M0 0 L14 10 L0 20 Z" fill="#3b7a50"/></svg>
<svg style="left:2811px;top:109px" width="24" height="26" viewBox="0 0 24 26"><path d="M2 6 L9.5 13.5 L21.5 2" stroke="#62a156" stroke-width="5.5" fill="none"/><path d="M1.5 25 L5.5 19.5 L9.5 24.5 L13.5 19.5 L17.5 24.5 L21.5 19.5" stroke="#62a156" stroke-width="2" fill="none"/></svg>
<div class="ln" style="top:108px">1</div>
<div class="ln" style="top:142px">2</div>
<div class="ln" style="top:176px">3</div>
<div class="ln" style="top:210px">4</div>
<div class="ln" style="top:244px">5</div>
<div class="ln" style="top:278px">6</div>
<div class="ln" style="top:312px">7</div>
<div class="ln" style="top:346px">8</div>
<div class="ln" style="top:380px">9</div>
<div class="ln" style="top:414px">10</div>
<div class="ln" style="top:448px">11</div>
<div class="ln" style="top:482px">12</div>
<div class="ln" style="top:516px">13</div>
<div class="ln" style="top:550px">14</div>
<div class="ln" style="top:584px">15</div>
<div class="ln" style="top:618px">16</div>
<div class="ln" style="top:652px">17</div>
<div class="ln" style="top:686px">18</div>
<div class="ln" style="top:720px">19</div>
<div class="ln" style="top:754px">20</div>
<div class="ln" style="top:788px">21</div>
<div class="ln" style="top:822px">22</div>
<div class="ln" style="top:856px">23</div>
<div class="ln" style="top:890px">24</div>
<div class="ln" style="top:924px">25</div>
<div class="ln" style="top:958px">26</div>
<div class="ln" style="top:992px">27</div>
<div class="ln" style="top:1026px">28</div>
<svg style="left:1256px;top:167px" width="96" height="6" viewBox="0 0 96 6"><path d="M0 5 L4 1.2 L8 5 L12 1.2 L16 5 L20 1.2 L24 5 L28 1.2 L32 5 L36 1.2 L40 5 L44 1.2 L48 5 L52 1.2 L56 5 L60 1.2 L64 5 L68 1.2 L72 5 L76 1.2 L80 5 L84 1.2 L88 5 L92 1.2 L96 5" stroke="#8aa31e" stroke-width="2" fill="none"/></svg>
<svg style="left:1736px;top:201px" width="96" height="6" viewBox="0 0 96 6"><path d="M0 5 L4 1.2 L8 5 L12 1.2 L16 5 L20 1.2 L24 5 L28 1.2 L32 5 L36 1.2 L40 5 L44 1.2 L48 5 L52 1.2 L56 5 L60 1.2 L64 5 L68 1.2 L72 5 L76 1.2 L80 5 L84 1.2 L88 5 L92 1.2 L96 5" stroke="#8aa31e" stroke-width="2" fill="none"/></svg>
<svg style="left:1192px;top:303px" width="96" height="6" viewBox="0 0 96 6"><path d="M0 5 L4 1.2 L8 5 L12 1.2 L16 5 L20 1.2 L24 5 L28 1.2 L32 5 L36 1.2 L40 5 L44 1.2 L48 5 L52 1.2 L56 5 L60 1.2 L64 5 L68 1.2 L72 5 L76 1.2 L80 5 L84 1.2 L88 5 L92 1.2 L96 5" stroke="#8aa31e" stroke-width="2" fill="none"/></svg>
<svg style="left:1530px;top:677px" width="80" height="6" viewBox="0 0 80 6"><path d="M0 5 L4 1.2 L8 5 L12 1.2 L16 5 L20 1.2 L24 5 L28 1.2 L32 5 L36 1.2 L40 5 L44 1.2 L48 5 L52 1.2 L56 5 L60 1.2 L64 5 L68 1.2 L72 5 L76 1.2 L80 5" stroke="#8aa31e" stroke-width="2" fill="none"/></svg>
<svg style="left:1642px;top:677px" width="64" height="6" viewBox="0 0 64 6"><path d="M0 5 L4 1.2 L8 5 L12 1.2 L16 5 L20 1.2 L24 5 L28 1.2 L32 5 L36 1.2 L40 5 L44 1.2 L48 5 L52 1.2 L56 5 L60 1.2 L64 5" stroke="#8aa31e" stroke-width="2" fill="none"/></svg>
<svg style="left:1586px;top:711px" width="64" height="6" viewBox="0 0 64 6"><path d="M0 5 L4 1.2 L8 5 L12 1.2 L16 5 L20 1.2 L24 5 L28 1.2 L32 5 L36 1.2 L40 5 L44 1.2 L48 5 L52 1.2 L56 5 L60 1.2 L64 5" stroke="#8aa31e" stroke-width="2" fill="none"/></svg>
<div class="code" style="top:108px"><span class="cm">/<span class="ast"><i>*</i><svg width="16" height="13.8" viewBox="0 0 16 15.6" preserveAspectRatio="none"><path d="M8 0.5 V15.1 M1.3 4 L14.7 11.6 M1.3 11.6 L14.7 4" stroke="currentColor" stroke-width="2.1"/></svg></span></span></div>
<div class="code" style="top:142px"><span class="cm"> <span class="ast"><i>*</i><svg width="16" height="13.8" viewBox="0 0 16 15.6" preserveAspectRatio="none"><path d="M8 0.5 V15.1 M1.3 4 L14.7 11.6 M1.3 11.6 L14.7 4" stroke="currentColor" stroke-width="2.1"/></svg></span> Copyright 2018 <span>Aliyun</span>.com All right reserved. This software is the</span></div>
<div class="code" style="top:176px"><span class="cm"> <span class="ast"><i>*</i><svg width="16" height="13.8" viewBox="0 0 16 15.6" preserveAspectRatio="none"><path d="M8 0.5 V15.1 M1.3 4 L14.7 11.6 M1.3 11.6 L14.7 4" stroke="currentColor" stroke-width="2.1"/></svg></span>  confidential and proprietary information of <span>Aliyun</span>.com ("Confidential</span></div>
<div class="code" style="top:210px"><span class="cm"> <span class="ast"><i>*</i><svg width="16" height="13.8" viewBox="0 0 16 15.6" preserveAspectRatio="none"><path d="M8 0.5 V15.1 M1.3 4 L14.7 11.6 M1.3 11.6 L14.7 4" stroke="currentColor" stroke-width="2.1"/></svg></span>  Information"). You shall not disclose such Confidential Information and shall</span></div>
<div class="code" style="top:244px"><span class="cm"> <span class="ast"><i>*</i><svg width="16" height="13.8" viewBox="0 0 16 15.6" preserveAspectRatio="none"><path d="M8 0.5 V15.1 M1.3 4 L14.7 11.6 M1.3 11.6 L14.7 4" stroke="currentColor" stroke-width="2.1"/></svg></span>  use it only in accordance with the terms of the license agreement you entered</span></div>
<div class="code" style="top:278px"><span class="cm"> <span class="ast"><i>*</i><svg width="16" height="13.8" viewBox="0 0 16 15.6" preserveAspectRatio="none"><path d="M8 0.5 V15.1 M1.3 4 L14.7 11.6 M1.3 11.6 L14.7 4" stroke="currentColor" stroke-width="2.1"/></svg></span>  into with <span>Aliyun</span>.com.</span></div>
<div class="code" style="top:312px"><span class="cm"> <span class="ast"><i>*</i><svg width="16" height="13.8" viewBox="0 0 16 15.6" preserveAspectRatio="none"><path d="M8 0.5 V15.1 M1.3 4 L14.7 11.6 M1.3 11.6 L14.7 4" stroke="currentColor" stroke-width="2.1"/></svg></span>/</span></div>
<div class="code" style="top:380px"><span class="kw">package</span> stringutil</div>
<div class="code" style="top:448px"><span class="kw">import</span> <span class="st">"testing"</span></div>
<div class="code" style="top:516px"><span class="kw">func</span> TestReverse(t <span class="ast"><i>*</i><svg width="16" height="13.8" viewBox="0 0 16 15.6" preserveAspectRatio="none"><path d="M8 0.5 V15.1 M1.3 4 L14.7 11.6 M1.3 11.6 L14.7 4" stroke="currentColor" stroke-width="2.1"/></svg></span>testing.<span class="ty">T</span>) <span class="br">{</span></div>
<div class="code" style="top:550px">    cases := <span class="br">[]</span><span class="kw">struct</span> <span class="br">{</span></div>
<div class="code" style="top:584px">        in, want <span class="ty">string</span></div>
<div class="code" style="top:618px">    <span class="br">}{</span></div>
<div class="code" style="top:652px">        <span class="br">{</span><span class="hint" style="width:56px"><b style="width:48px">in:</b></span><span class="st">"Hello, world"</span>, <span class="hint" style="width:90px"><b style="width:82px">want:</b></span><span class="st">"<span>dlrow</span> ,<span>olleH</span>"</span><span class="br">}</span>,</div>
<div class="code" style="top:686px">        <span class="br">{</span><span class="hint" style="width:56px"><b style="width:48px">in:</b></span><span class="st">"Hello, <span style="display:inline-block;width:51px">世界</span>"</span>, <span class="hint" style="width:90px"><b style="width:82px">want:</b></span><span class="st">"<span style="display:inline-block;width:52px">界世</span> ,<span>olleH</span>"</span><span class="br">}</span>,</div>
<div class="code" style="top:720px">        <span class="br">{</span><span class="hint" style="width:56px"><b style="width:48px">in:</b></span><span class="st">""</span>, <span class="hint" style="width:90px"><b style="width:82px">want:</b></span><span class="st">""</span><span class="br">}</span>,</div>
<div class="code" style="top:754px">    <span class="br">}</span></div>
<div class="code" style="top:788px">    <span class="kw">for</span> _, <span class="vr">c</span> := <span class="kw">range</span> cases <span class="br">{</span></div>
<div class="code" style="top:822px">        <span class="vr">got</span> := Reverse(<span class="vr">c</span>.in)</div>
<div class="code" style="top:856px">        <span class="kw">if</span> <span class="vr">got</span> != <span class="vr">c</span>.want <span class="br">{</span></div>
<div class="code" style="top:890px">            t.Errorf(<span class="hint" style="width:109px"><b style="width:101px">format:</b></span><span class="st">"Reverse(%q) == %q, want %q"</span>, <span class="vr">c</span>.in, <span class="vr">got</span>, <span class="vr">c</span>.want)</div>
<div class="code" style="top:924px">        <span class="br">}</span></div>
<div class="code" style="top:958px">    <span class="br">}</span></div>
<div class="code" style="top:992px"><span class="br">}</span></div>
<div class="a" style="left:0px;top:56px;width:40px;height:170px;background:#282a2c;"></div>
<div class="t" style="left:7px;top:170px;font-size:22px;line-height:28px;color:#ffffff;transform-origin:0 0;transform:translateY(0) rotate(-90deg);"><span style="text-decoration:underline">1</span>: Project</div>
<svg style="left:10px;top:182px" width="22" height="18" viewBox="0 0 22 18"><path d="M0 0 H8 L11 4 H22 V18 H0 Z" fill="#afb1b3"/></svg>
<div class="t" style="left:7px;top:1343px;font-size:23.5px;line-height:29px;color:#bbbbbb;transform-origin:0 0;transform:translateY(0) rotate(-90deg);"><span style="text-decoration:underline">7</span>: Structure</div>
<svg style="left:12px;top:1353px" width="18" height="20" viewBox="0 0 18 20"><rect x="0" y="12" width="7" height="7" fill="#afb1b3"/><rect x="10" y="1" width="7" height="7" fill="#afb1b3"/><rect x="10" y="12" width="7" height="7" fill="#afb1b3"/></svg>
<div class="t" style="left:7px;top:1537px;font-size:23.5px;line-height:29px;color:#bbbbbb;transform-origin:0 0;transform:translateY(0) rotate(-90deg);"><span style="text-decoration:underline">2</span>: Favorites</div>
<svg style="left:8px;top:1546px" width="26" height="25" viewBox="0 0 26 25"><path d="M13 0 L16.5 9 L26 9.5 L18.5 15.5 L21 25 L13 19.5 L5 25 L7.5 15.5 L0 9.5 L9.5 9 Z" fill="#afb1b3"/></svg>
<div class="t" style="left:7px;top:1661px;font-size:23.5px;line-height:29px;color:#bbbbbb;transform-origin:0 0;transform:translateY(0) rotate(-90deg);">Web</div>
<svg style="left:9px;top:1671px" width="23" height="23" viewBox="0 0 23 23"><circle cx="11.5" cy="11.5" r="10.5" fill="#afb1b3"/><path d="M4 6 C7 6 9 8 8 11 C7 13 10 14 9 17 L6 19 M14 3 C13 6 16 7 18 6 M13 21 C13 17 16 15 19 16" stroke="#3c3f41" stroke-width="2.2" fill="none"/></svg>
<svg style="left:2849px;top:79px" width="20" height="23" viewBox="0 0 20 23"><circle cx="10" cy="4" r="3.8" fill="#afb1b3"/><ellipse cx="10" cy="17" rx="5" ry="5.5" fill="#afb1b3"/><path d="M1 1 C4 5 6 7 10 10 C14 7 16 5 19 1 M0 10.5 H20 M1 23 V18 L6 13 M19 23 V18 L14 13" stroke="#afb1b3" stroke-width="1.6" fill="none"/></svg>
<div class="t" style="left:2843px;top:111.5px;font-size:23.5px;line-height:29px;color:#bbbbbb;transform-origin:0 0;transform:translateX(29px) rotate(90deg);">Ant Build</div>
<div class="t" style="left:2845px;top:239.60px;font-size:30px;line-height:38px;color:#afb1b3;font-weight:bold;font-style:italic;letter-spacing:-1px">m</div>
<div class="t" style="left:2843px;top:282px;font-size:23px;line-height:29px;color:#bbbbbb;transform-origin:0 0;transform:translateX(29px) rotate(90deg);">Maven Projects</div>
<svg style="left:2848px;top:487px" width="22" height="23" viewBox="0 0 22 23"><path d="M3 0 H17 C21 0 22 3 22 3.5 C22 4 21 7 17 7 H3 C1 7 0 5 0 3.5 C0 2 1 0 3 0 Z M3 8 H17 C21 8 22 11 22 11.5 C22 12 21 15 17 15 H3 C1 15 0 13 0 11.5 C0 10 1 8 3 8 Z M3 16 H17 C21 16 22 19 22 19.5 C22 20 21 23 17 23 H3 C1 23 0 21 0 19.5 C0 18 1 16 3 16 Z" fill="#afb1b3"/></svg>
<div class="t" style="left:2843px;top:521px;font-size:23.5px;line-height:29px;color:#bbbbbb;transform-origin:0 0;transform:translateX(29px) rotate(90deg);">Database</div>
<svg style="left:2848px;top:662px" width="22" height="18" viewBox="0 0 22 18"><g fill="#afb1b3"><rect x="0" y="0" width="4" height="4"/><rect x="18" y="0" width="4" height="4"/><rect x="0" y="7" width="4" height="4"/><rect x="18" y="7" width="4" height="4"/><rect x="0" y="14" width="4" height="4"/><rect x="18" y="14" width="4" height="4"/><rect x="6" y="0" width="10" height="4"/><rect x="6" y="7" width="10" height="4"/><rect x="6" y="14" width="10" height="4"/></g></svg>
<div class="t" style="left:2843px;top:691.5px;font-size:23.5px;line-height:29px;color:#bbbbbb;transform-origin:0 0;transform:translateX(29px) rotate(90deg);">SciView</div>
<svg style="left:2848px;top:820px" width="24" height="24" viewBox="0 0 24 24"><path d="M2 2 L12 2 L18 10 L10 18 L2 10 Z" fill="#d98b3a"/><path d="M8 14 L12 19 L21 8" stroke="#62b543" stroke-width="3" fill="none"/></svg>
<div class="t" style="left:2843px;top:853px;font-size:23px;line-height:29px;color:#bbbbbb;transform-origin:0 0;transform:translateX(29px) rotate(90deg);">Bean Validation</div>
<svg style="left:59px;top:1729px" width="17" height="19" viewBox="0 0 17 19"><path d="M0 0 L17 9.5 L0 19 Z" fill="#afb1b3"/></svg>
<div class="t" style="left:90px;top:1723.53px;font-size:23px;line-height:29px;color:#bbbbbb;"><u>4</u>: Run</div>
<svg style="left:197px;top:1729px" width="22" height="19" viewBox="0 0 22 19"><rect x="0" y="0" width="4" height="3" fill="#afb1b3"/><rect x="6" y="0" width="16" height="3" fill="#afb1b3"/><rect x="0" y="8" width="4" height="3" fill="#afb1b3"/><rect x="6" y="8" width="16" height="3" fill="#afb1b3"/><rect x="0" y="16" width="4" height="3" fill="#afb1b3"/><rect x="6" y="16" width="16" height="3" fill="#afb1b3"/></svg>
<div class="t" style="left:228px;top:1723.53px;font-size:23px;line-height:29px;color:#bbbbbb;"><u>6</u>: TODO</div>
<svg style="left:360px;top:1728px" width="22" height="20" viewBox="0 0 22 20"><rect x="0" y="0" width="22" height="20" fill="#afb1b3"/><path d="M4 5 L9 9 L4 13" stroke="#3c3f41" stroke-width="2" fill="none"/><rect x="10" y="14" width="7" height="2" fill="#3c3f41"/></svg>
<div class="t" style="left:393px;top:1723.53px;font-size:23px;line-height:29px;color:#bbbbbb;">Terminal</div>
<svg style="left:531px;top:1726px" width="24" height="24" viewBox="0 0 24 24"><rect x="1" y="4" width="4" height="20" fill="#afb1b3"/><path d="M5 15.5 H15.5 V8" stroke="#afb1b3" stroke-width="3.5" fill="none"/><path d="M9.5 10 L15.5 3 L21.5 10 Z" fill="#afb1b3"/></svg>
<div class="t" style="left:562px;top:1723.53px;font-size:23px;line-height:29px;color:#bbbbbb;"><u>9</u>: Version Control</div>
<svg style="left:790px;top:1727px" width="26" height="22" viewBox="0 0 26 22"><path d="M24 0 C27 8 24 20 10 21 C5 21.5 2 20 0 18 C2 11 8 6 16 5 C20 4.5 23 3 24 0 Z" fill="#afb1b3"/><path d="M4 20 C10 16 15 12 20 6" stroke="#3c3f41" stroke-width="1.5" fill="none"/></svg>
<div class="t" style="left:824px;top:1723.53px;font-size:23px;line-height:29px;color:#bbbbbb;">Spring</div>
<svg style="left:936px;top:1728px" width="26" height="20" viewBox="0 0 26 20"><rect x="0" y="0" width="26" height="20" fill="#afb1b3"/><path d="M4 4 H11 M4 10 H10 M4 16 H11 M4 4 V16 M15 4 H22 M15 10 H21 M15 16 H22 M15 4 V16" stroke="#2d2f30" stroke-width="2.4" fill="none"/></svg>
<div class="t" style="left:970px;top:1723.53px;font-size:23px;line-height:29px;color:#bbbbbb;">Java Enterprise</div>
<svg style="left:1177px;top:1726px" width="22" height="24" viewBox="0 0 22 24"><circle cx="11" cy="12" r="10" fill="#2f6fd0"/><path d="M11 12 L11 2 A10 10 0 0 1 20.5 15 Z" fill="#e23a32"/><path d="M11 12 L20.5 15 A10 10 0 0 1 5 20 Z" fill="#3aa845"/><path d="M11 12 L11 2 A10 10 0 0 0 5 20 Z" fill="#2f6fd0"/><circle cx="9" cy="8" r="3" fill="#ffffff" opacity="0.35"/></svg>
<div class="t" style="left:1208px;top:1723.53px;font-size:23px;line-height:29px;color:#bbbbbb;letter-spacing:0.6px">Statistic</div>
<svg style="left:2686px;top:1726px" width="26" height="26" viewBox="0 0 26 26"><circle cx="13" cy="13" r="13" fill="#499c54"/><path d="M13 13 H26 V26 H13 Z" fill="#499c54"/></svg>
<div class="t" style="left:2694px;top:1727.72px;font-size:21px;line-height:26px;color:#ffffff;font-weight:bold">2</div>
<div class="t" style="left:2721px;top:1723.53px;font-size:23px;line-height:29px;color:#bbbbbb;">Event Log</div>
<svg style="left:11px;top:1767px" width="26" height="26" viewBox="0 0 26 26"><rect x="6" y="2" width="18" height="18" stroke="#c4c4c4" stroke-width="2" fill="none"/><path d="M2 5 V24 H21" stroke="#c4c4c4" stroke-width="2" fill="none"/></svg>
<div class="t" style="left:62px;top:1766.86px;font-size:23.5px;line-height:29px;color:#bbbbbb;letter-spacing:0.1px">Tests passed: 1 (moments ago)</div>
<div class="t" style="left:2406px;top:1765.86px;font-size:23.5px;line-height:29px;color:#bbbbbb;">12:1</div>
<div class="t" style="left:2468px;top:1765.86px;font-size:23.5px;line-height:29px;color:#bbbbbb;">LF</div>
<svg style="left:2500px;top:1772px" width="12" height="18" viewBox="0 0 12 18"><path d="M0 7 L6 0 L12 7 Z M0 11 L6 18 L12 11 Z" fill="#a0a0a0"/></svg>
<div class="t" style="left:2541px;top:1765.86px;font-size:23.5px;line-height:29px;color:#9a9a9a;">UTF-8</div>
<div class="t" style="left:2634px;top:1765.86px;font-size:23.5px;line-height:29px;color:#bbbbbb;">Git: master</div>
<div class="a" style="left:2733px;top:1745px;width:147px;height:55px;background:#000000;"></div>
<svg style="left:2744px;top:1755px" width="40" height="33" viewBox="0 0 40 33"><path d="M30 5 C26 1.5 22 0 17 0 C7.5 0 0 7.5 0 16.5 C0 25.5 7.5 33 17 33 C22 33 26 31 30 28 L26 24 C23.5 26.5 20.5 28 17 28 C10.5 28 5.5 22.5 5.5 16.5 C5.5 10.5 10.5 5 17 5 C20.5 5 23.5 6.5 26 9 Z" fill="#ffffff"/><path d="M10 10 L22 25 H28 L16 10 Z" fill="#ffffff"/><path d="M14 25 C18 18 26 10 38 7 C30 12 25 18 22 25 Z" fill="#f2a81d"/></svg>
<div class="t" style="left:2785px;top:1759.74px;font-size:19.5px;line-height:24px;color:#ffffff;letter-spacing:2px;-webkit-text-stroke:0.7px #fff">创新互联</div>
<div class="t" style="left:2785px;top:1779.42px;font-size:6px;line-height:8px;color:#ffffff;letter-spacing:1.2px;-webkit-text-stroke:0">CHUANG XIN HU LIAN</div>
</body></html>
